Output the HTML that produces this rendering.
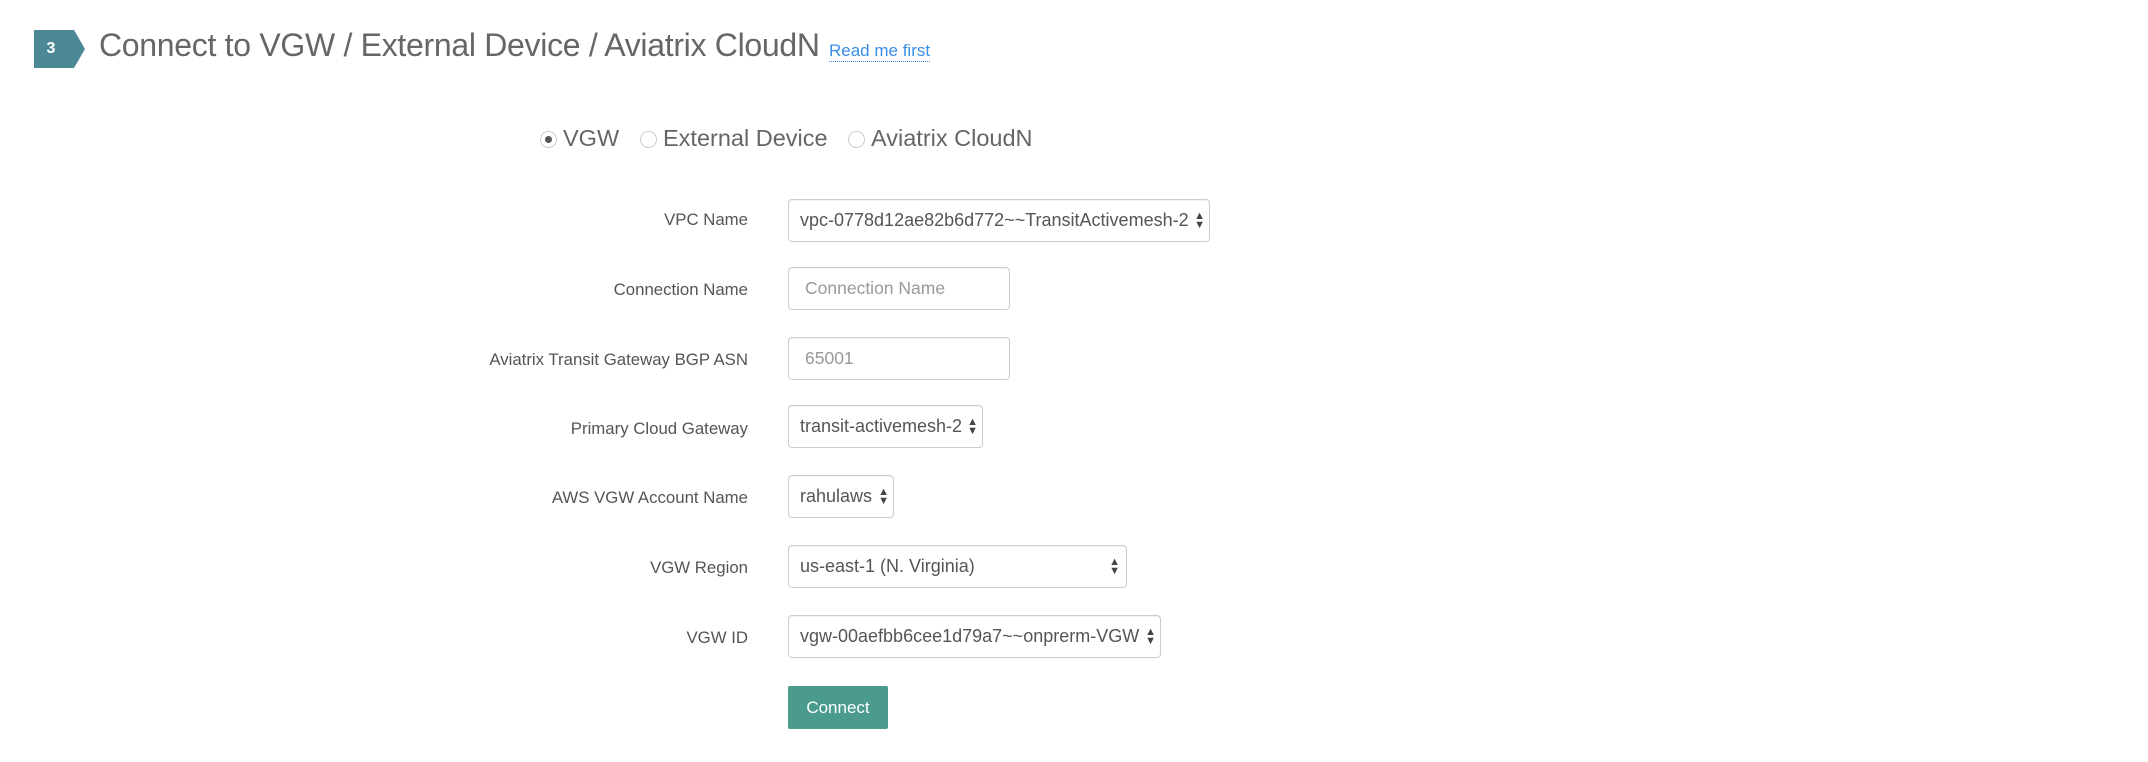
<!DOCTYPE html>
<html><head><meta charset="utf-8"><style>
body{margin:0;width:2148px;height:762px;background:#fff;font-family:"Liberation Sans",sans-serif;color:#555;position:relative;overflow:hidden}
.a{position:absolute}
.badge{left:34px;top:30px;width:40px;height:38px;background:#4d8995;color:#fff;font-size:16px;font-weight:bold;line-height:38px;text-align:center;box-sizing:border-box;padding-right:6px}
.badge:after{content:"";position:absolute;right:-11px;top:0;border-left:11px solid #4d8995;border-top:19px solid transparent;border-bottom:19px solid transparent}
.title{left:99px;top:27px;font-size:32px;color:#666;letter-spacing:-0.3px}
.read{left:829px;top:41px;font-size:17px;color:#3a8ee6;border-bottom:1px dotted #3a8ee6;line-height:20px}
.radio{top:124px;font-size:23.5px;color:#666;line-height:28px}
.rc{display:inline-block;width:17px;height:17px;border:1px solid #ccc;border-radius:50%;vertical-align:-2px;margin-right:6px;box-sizing:border-box;position:relative}
.rc.on:after{content:"";position:absolute;left:4px;top:4px;width:7px;height:7px;border-radius:50%;background:#555}
.lbl{right:1400px;font-size:16.8px;color:#555;text-align:right;white-space:nowrap}
.box{left:788px;height:43px;border:1px solid #ccc;border-radius:4px;box-sizing:border-box;font-size:18px;line-height:41px;padding-left:11px;color:#555;white-space:nowrap;box-shadow:inset 0 1px 1px rgba(0,0,0,.06)}
.ph{color:#999;padding-left:16px;font-size:17.5px}
.arr{position:absolute;right:4px;top:12px;font-size:11px;line-height:9px;color:#444}
.btn{left:788px;top:686px;width:100px;height:43px;background:#4a9b8e;color:#fff;font-size:17px;line-height:43px;text-align:center;border-radius:2px}
</style></head><body>
<div class="a badge">3</div>
<div class="a title">Connect to VGW / External Device / Aviatrix CloudN</div>
<div class="a read">Read me first</div>
<div class="a radio" style="left:540px"><span class="rc on"></span>VGW</div>
<div class="a radio" style="left:640px"><span class="rc"></span>External Device</div>
<div class="a radio" style="left:848px"><span class="rc"></span>Aviatrix CloudN</div>

<div class="a lbl" style="top:210px">VPC Name</div>
<div class="a box" style="top:199px;width:422px">vpc-0778d12ae82b6d772~~TransitActivemesh-2<span class="arr">▲<br>▼</span></div>

<div class="a lbl" style="top:280px">Connection Name</div>
<div class="a box ph" style="top:267px;width:222px">Connection Name</div>

<div class="a lbl" style="top:350px">Aviatrix Transit Gateway BGP ASN</div>
<div class="a box ph" style="top:337px;width:222px">65001</div>

<div class="a lbl" style="top:419px">Primary Cloud Gateway</div>
<div class="a box" style="top:405px;width:195px">transit-activemesh-2<span class="arr">▲<br>▼</span></div>

<div class="a lbl" style="top:488px">AWS VGW Account Name</div>
<div class="a box" style="top:475px;width:106px">rahulaws<span class="arr">▲<br>▼</span></div>

<div class="a lbl" style="top:558px">VGW Region</div>
<div class="a box" style="top:545px;width:339px">us-east-1 (N. Virginia)<span class="arr" style="right:6px">▲<br>▼</span></div>

<div class="a lbl" style="top:628px">VGW ID</div>
<div class="a box" style="top:615px;width:373px">vgw-00aefbb6cee1d79a7~~onprerm-VGW<span class="arr">▲<br>▼</span></div>

<div class="a btn">Connect</div>
</body></html>
